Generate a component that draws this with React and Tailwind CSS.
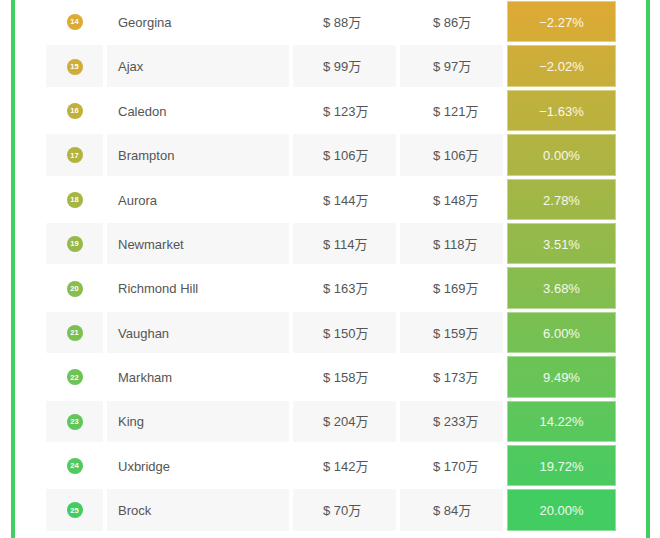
import React from "react";

const rows = [
  { rank: 14, name: "Georgina", before: "$ 88万", after: "$ 86万", change: "−2.27%" },
  { rank: 15, name: "Ajax", before: "$ 99万", after: "$ 97万", change: "−2.02%" },
  { rank: 16, name: "Caledon", before: "$ 123万", after: "$ 121万", change: "−1.63%" },
  { rank: 17, name: "Brampton", before: "$ 106万", after: "$ 106万", change: "0.00%" },
  { rank: 18, name: "Aurora", before: "$ 144万", after: "$ 148万", change: "2.78%" },
  { rank: 19, name: "Newmarket", before: "$ 114万", after: "$ 118万", change: "3.51%" },
  { rank: 20, name: "Richmond Hill", before: "$ 163万", after: "$ 169万", change: "3.68%" },
  { rank: 21, name: "Vaughan", before: "$ 150万", after: "$ 159万", change: "6.00%" },
  { rank: 22, name: "Markham", before: "$ 158万", after: "$ 173万", change: "9.49%" },
  { rank: 23, name: "King", before: "$ 204万", after: "$ 233万", change: "14.22%" },
  { rank: 24, name: "Uxbridge", before: "$ 142万", after: "$ 170万", change: "19.72%" },
  { rank: 25, name: "Brock", before: "$ 70万", after: "$ 84万", change: "20.00%" },
];

// gold -> green, sampled from the design
const from = [221, 170, 52];
const to = [67, 204, 98];

const mix = (t) => {
  const c = from.map((v, i) => Math.round(v + (to[i] - v) * t));
  return `rgb(${c[0]}, ${c[1]}, ${c[2]})`;
};

const App = () => {
  return (
    <div
      className="w-[660px] h-[538px] overflow-hidden bg-white"
      style={{ fontFamily: '"Liberation Sans", "Noto Sans CJK SC", Arial, sans-serif' }}
    >
      <div className="ml-[11px] w-[639px] h-full border-x-4 border-[#3fcf62] pl-[31px] pt-[1px]">
        <div className="grid grid-cols-[57px_182px_103px_103px_109px] gap-x-[4px] gap-y-[3px] auto-rows-[41.4px]">
          {rows.map((row, idx) => {
            const stripe = idx % 2 === 1 ? "bg-[#f7f7f7]" : "bg-white";
            const top = mix(idx / (rows.length - 1));
            const bottom = mix(Math.min(1, (idx + 0.6) / (rows.length - 1)));
            return (
              <React.Fragment key={row.rank}>
                <div className={`${stripe} flex items-center justify-center pt-[1px]`}>
                  <span
                    className="w-[16px] h-[16px] rounded-full flex items-center justify-center text-white text-[7.5px] font-bold leading-none"
                    style={{ backgroundColor: top }}
                  >
                    {row.rank}
                  </span>
                </div>
                <div className={`${stripe} flex items-center pl-[11px] pt-[2px] text-[13px] text-[#555]`}>
                  {row.name}
                </div>
                <div className={`${stripe} flex items-center pl-[30px] pt-[2px] text-[13px] text-[#555]`}>
                  {row.before}
                </div>
                <div className={`${stripe} flex items-center pl-[33px] pt-[2px] text-[13px] text-[#555]`}>
                  {row.after}
                </div>
                <div
                  className="flex items-center justify-center pt-[2px] border border-white/40 text-[13px] text-white/90"
                  style={{ background: `linear-gradient(${top}, ${bottom})` }}
                >
                  {row.change}
                </div>
              </React.Fragment>
            );
          })}
        </div>
      </div>
    </div>
  );
};

export default App;
